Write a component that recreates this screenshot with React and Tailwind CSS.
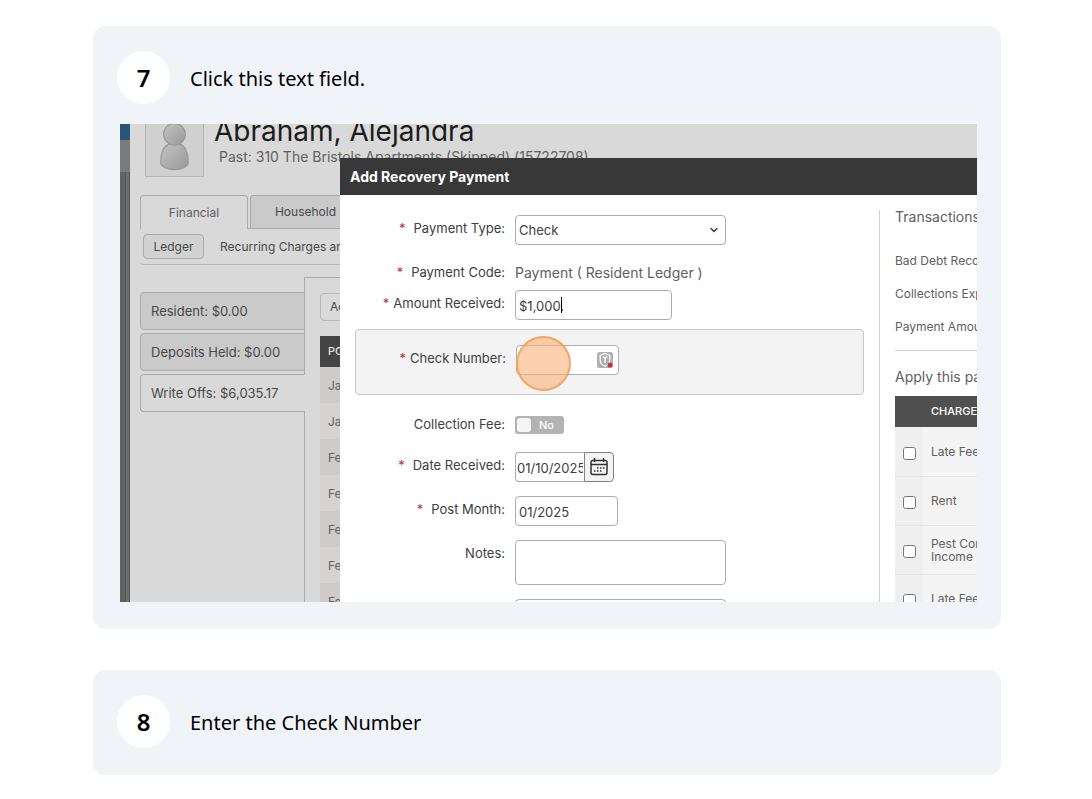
import { useState } from "react";
import { ChevronDown } from "lucide-react";

const ledgerRows = ["Jan 2024", "Jan 2024", "Feb 2024", "Feb 2024", "Feb 2024", "Feb 2024", "Feb 2024"];

const charges = ["Late Fee", "Rent", "Pest Control Income", "Late Fee"];

const inputClass = "block h-[30px] rounded-[4px] border border-[#adadad] bg-white px-[3px] pt-px text-[13px] text-[#404040] outline-none";

const StepCard = ({ number, title, children }) => (
  <section className="rounded-xl bg-[#f0f3f8] px-6 pt-[25px] pb-[27px]">
    <header className="flex items-center gap-5">
      <span className="flex size-[53px] items-center justify-center rounded-full bg-white text-[24px] font-semibold">
        {number}
      </span>
      <h2 className="pt-[2px] text-[20px]">{title}</h2>
    </header>
    {children}
  </section>
);

const Avatar = () => (
  <div className="-mt-[5px] h-[58px] w-[59px] shrink-0 border border-[#b4b4b4] bg-[#d0d0d0]">
    <svg viewBox="0 0 58 56" className="h-full w-full">
      <defs>
        <linearGradient id="person" x1="0" y1="0" x2="1" y2="1">
          <stop offset="0" stopColor="#c4c4c4" />
          <stop offset="1" stopColor="#989898" />
        </linearGradient>
      </defs>
      <g fill="url(#person)" stroke="#999" strokeWidth="1.2">
        <path d="M15 43c0-11 3-20 14-20s14 9 14 20c0 4-7 7-14 7s-14-3-14-7z" />
        <circle cx="29" cy="14" r="11" />
      </g>
    </svg>
  </div>
);

const CalendarIcon = () => (
  <svg viewBox="0 0 18 18" className="size-[18px]" fill="none" stroke="#333" strokeWidth="1.5">
    <rect x="1" y="2.5" width="16" height="14" rx="2" />
    <path d="M1 6.5h16M4.5 0v4M13.5 0v4" />
    <path d="M7 10h1.5M10 10h1.5M13 10h1.500M4 13h1.500M7 13h1.500M10 13h1.500" strokeWidth="1.5" />
  </svg>
);

const VaultIcon = () => (
  <svg viewBox="0 0 18 18" className="size-[18px]">
    <rect x="1" y="1" width="16" height="16" rx="2.5" fill="#b0b0b0" />
    <path d="M9 2.5l4.8 1.800v5c0 3-2.200 4.900-4.800 6-2.600-1.100-4.800-3-4.800-6v-5z" fill="none" stroke="#fff" strokeWidth="1.2" />
    <path d="M9 12V7M7 5.500c.5 1.500 3.500 1.500 4 0" fill="none" stroke="#fff" strokeWidth="1.5" />
    <circle cx="14" cy="14" r="2.5" fill="#c9303e" />
  </svg>
);

const Field = ({ id, label, required, starGap = "mr-2", className = "", children }) => (
  <div className={`flex items-start gap-[10px] ${className}`}>
    <label htmlFor={id} className="w-[150px] shrink-0 pt-[3px] text-right text-[13px] leading-5 text-[#404040]">
      {required && <span className={`text-[#b8323c] ${starGap}`}>*</span>}
      {label}:
    </label>
    {children}
  </div>
);

const ResidentPage = () => (
  <div className="flex h-full">
    <div className="flex w-[10px] shrink-0 flex-col bg-[#626262]">
      <div className="h-4 bg-[#2b5476]" />
      <div className="h-8 bg-[#7b7b7b]" />
      <div className="ml-[5px] flex-1 border-x border-[#555] bg-[#6d6d6d]" />
    </div>
    <div className="min-w-0 flex-1 bg-[#d9d9d9] pl-[10px] text-[#484848]">
      <div className="flex gap-[10px] pl-[5px]">
        <Avatar />
        <div className="-mt-[9px] whitespace-nowrap">
          <h3 className="text-[28px] leading-8 text-[#1b1b1b]">Abraham, Alejandra</h3>
          <p className="pl-[5px] text-[14px] leading-5 text-[#606060]">Past: 310 The Bristols Apartments (Skipped) (15722708)</p>
        </div>
      </div>

      <nav className="mt-[18px] flex text-[12px]">
        <button className="h-[34px] w-[108px] rounded-t border border-b-0 border-[#aaa] text-[#606060]">Financial</button>
        <div className="w-[2px] border-b border-[#aaa]" />
        <button className="h-[34px] w-[110px] rounded-tl border border-r-0 border-[#aaa] bg-[#cacaca]">Household</button>
      </nav>
      <div className="flex h-9 items-center gap-4 rounded-bl border-b border-[#b4b4b4] pl-[3px] text-[12px] whitespace-nowrap">
        <button className="h-[25px] w-[61px] rounded border border-[#aaa] bg-[#d2d2d2]">Ledger</button>
        <button>Recurring Charges and Credits</button>
      </div>

      <div className="mt-3 flex h-[330px]">
        <div className="flex w-[165px] shrink-0 flex-col text-[13px] leading-5">
          <div className="h-[15px] border-r border-[#aaa]" />
          <button className="h-[38px] rounded-l border border-[#aaa] bg-[#cacaca] pl-[10px] text-left">Resident: $0.00</button>
          <div className="h-[3px] border-r border-[#aaa]" />
          <button className="h-[38px] rounded-l border border-[#aaa] bg-[#cacaca] pl-[10px] text-left">Deposits Held: $0.00</button>
          <div className="h-[3px] border-r border-[#aaa]" />
          <button className="h-[38px] rounded-l border border-r-0 border-[#aaa] pl-[10px] text-left">Write Offs: $6,035.17</button>
          <div className="flex-1 border-r border-[#aaa]" />
        </div>
        <div className="flex-1 border-t border-[#aaa] pt-[15px] pl-[15px]">
          <button className="h-7 rounded border border-[#b8b8b8] px-[9px] text-[12px]">Add Charge</button>
          <table className="mt-[15px] w-full text-left text-[11px]">
            <thead>
              <tr className="h-[31px] bg-[#444] text-[#e2e2e2]">
                <th className="pl-2 font-medium">POST MONTH</th>
              </tr>
            </thead>
            <tbody>
              {ledgerRows.map((month, idx) => (
                <tr key={idx} className="h-9 odd:bg-[#d0cbcb] even:bg-[#d7d2d1]">
                  <td className="pt-[2px] pl-2 text-[12px] text-[#606060]">{month}</td>
                </tr>
              ))}
            </tbody>
          </table>
        </div>
      </div>
    </div>
  </div>
);

const PaymentForm = () => {
  const [feeOn, setFeeOn] = useState(false);

  return (
    <form className="min-w-0 flex-1 px-[15px] pt-5">
      <Field id="type" label="Payment Type" required>
        <div className="relative">
          <select id="type" className={`${inputClass} w-[211px] appearance-none`}>
            <option>Check</option>
          </select>
          <ChevronDown className="pointer-events-none absolute top-[9px] right-[6px] size-3 text-[#404040]" strokeWidth={3} />
        </div>
      </Field>
      <Field id="code" label="Payment Code" required className="mt-[14px]">
        <output id="code" className="pt-1 text-[14px] leading-5 text-[#606060]">Payment ( Resident Ledger )</output>
      </Field>
      <Field id="amount" label="Amount Received" required starGap="mr-1" className="mt-[7px]">
        <div className="relative">
          <input id="amount" defaultValue="$1,000." className={`${inputClass} w-[157px]`} />
          <span className="absolute top-[7px] left-[46px] h-4 w-px bg-black" />
        </div>
      </Field>

      <div className="mt-[9px] rounded-[4px] border border-[#c8c8c8] bg-[#f3f3f3] pt-[15px] pb-[19px]">
        <Field id="check" label="Check Number" required starGap="mr-1">
          <div className="relative">
            <input id="check" className={`${inputClass} w-[103px]`} />
            <span className="absolute top-[6px] right-[5px]">
              <VaultIcon />
            </span>
            <span className="absolute -top-[9px] left-0 size-[55px] rounded-full border-2 border-[#f2a055]/85 bg-[#f8b27a]/60" />
          </div>
        </Field>
      </div>

      <Field id="fee" label="Collection Fee" className="mt-4">
        <button
          id="fee"
          type="button"
          role="switch"
          aria-checked={feeOn}
          onClick={() => setFeeOn(!feeOn)}
          className="mt-[5px] flex h-[18px] w-[49px] items-center gap-2 rounded-[3px] bg-[#b3b3b3] pl-[2px] text-[11px] font-medium text-white"
        >
          <span className="size-[14px] rounded-[3px] bg-[#f5f5f5]" />
          {feeOn ? "Yes" : "No"}
        </button>
      </Field>
      <Field id="date" label="Date Received" required className="mt-[18px]">
        <div className="flex">
          <input id="date" defaultValue="01/10/2025" className="h-[30px] w-[69px] rounded-l-[4px] border border-r-0 border-[#adadad] px-px pt-px text-[13px] text-[#404040] outline-none" />
          <button type="button" aria-label="Open calendar" className="flex h-[30px] w-[30px] items-center justify-center rounded-r-[4px] border border-[#808080] bg-[#f3f3f3]">
            <CalendarIcon />
          </button>
        </div>
      </Field>
      <Field id="month" label="Post Month" required className="mt-[14px]">
        <input id="month" defaultValue="01/2025" className={`${inputClass} w-[103px]`} />
      </Field>
      <Field id="notes" label="Notes" className="mt-[14px]">
        <textarea id="notes" className="block h-[45px] w-[211px] resize-none rounded-[4px] border border-[#adadad]" />
      </Field>
      <div className="mt-[14px] pl-40">
        <input aria-label="Memo" className={`${inputClass} w-[211px]`} />
      </div>
    </form>
  );
};

const Transactions = () => (
  <aside className="mt-[15px] w-[98px] shrink-0 overflow-hidden border-l border-[#d0d0d0] pl-[15px] whitespace-nowrap text-[#606060]">
    <h4 className="text-[14px] leading-[14px]">Transactions</h4>
    <ul className="mt-[29px] flex flex-col gap-[17px] border-b border-[#cfcfcf] pb-[15px] text-[12px] leading-4">
      <li>Bad Debt Recovery</li>
      <li>Collections Expense</li>
      <li>Payment Amount</li>
    </ul>
    <h4 className="mt-4 text-[14px] leading-5">Apply this payment</h4>
    <table className="mt-[9px] w-[200px] text-left text-[12px]">
      <thead>
        <tr className="h-[31px] bg-[#505050] text-white">
          <th className="w-7" />
          <th className="pl-2 text-[11px] font-medium">CHARGE CODE</th>
        </tr>
      </thead>
      <tbody>
        {charges.map((charge, idx) => (
          <tr key={idx} className="h-[49px] border-b border-[#e6e6e6] bg-[#f4f4f4]">
            <td className="bg-[#efefef] pl-2">
              <input id={`charge-${idx}`} type="checkbox" className="mt-1 block size-[13px]" />
            </td>
            <td className="pl-2 leading-[13px]">
              <label htmlFor={`charge-${idx}`} className="block w-[80px] whitespace-normal">{charge}</label>
            </td>
          </tr>
        ))}
      </tbody>
    </table>
  </aside>
);

const PaymentDialog = () => (
  <div role="dialog" aria-labelledby="dialog-title" className="absolute top-[34px] right-0 bottom-0 left-[220px] flex flex-col overflow-hidden bg-white">
    <h3 id="dialog-title" className="bg-[#383838] px-[10px] py-2 text-[14px] leading-[21px] font-bold text-white">
      Add Recovery Payment
    </h3>
    <div className="flex min-h-0 flex-1">
      <PaymentForm />
      <Transactions />
    </div>
  </div>
);

const App = () => (
  <main className="min-h-screen bg-white pt-[26px] pr-6 pb-6 pl-[26px] font-['Noto_Sans',sans-serif] text-black">
    <div className="mx-auto flex max-w-[908px] flex-col gap-[41px]">
      <StepCard number={7} title="Click this text field.">
        <div className="relative mt-5 ml-[3px] h-[478px] overflow-hidden font-['Inter',sans-serif]">
          <ResidentPage />
          <PaymentDialog />
        </div>
      </StepCard>
      <StepCard number={8} title="Enter the Check Number" />
    </div>
  </main>
);

export default App;
